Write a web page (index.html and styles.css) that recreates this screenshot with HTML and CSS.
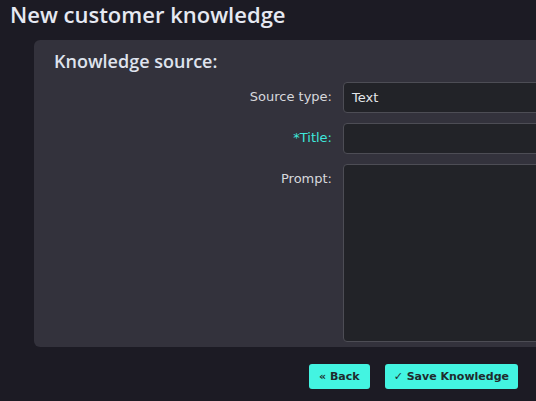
FILE: index.html
```html
<!DOCTYPE html>
<html lang="en">
<head>
<meta charset="utf-8">
<title>New customer knowledge</title>
<link rel="stylesheet" href="styles.css">
</head>
<body>
<main class="page">
  <h1 class="page-title">New customer knowledge</h1>
  <section class="panel">
    <h2 class="panel-title">Knowledge source:</h2>
    <div class="form-grid">
      <label class="field-label" for="src-type">Source type:</label>
      <div class="field-input select-box" id="src-type">Text</div>

      <label class="field-label required" for="title">*Title:</label>
      <input class="field-input" id="title" type="text">

      <label class="field-label" for="prompt">Prompt:</label>
      <textarea class="field-input field-area" id="prompt"></textarea>
    </div>
  </section>
  <div class="actions">
    <button class="btn btn-back" type="button">« Back</button>
    <button class="btn" type="button">✓ Save Knowledge</button>
  </div>
</main>
</body>
</html>
```

FILE: styles.css
```css
html, body {
  margin: 0;
  padding: 0;
  background: #1c1b24;
  overflow: hidden;
}

.page {
  width: 536px;
  height: 401px;
  overflow: hidden;
  font-family: "DejaVu Sans", Verdana, sans-serif;
}

.page-title {
  margin: 0;
  padding: 0 0 0 10px;
  height: 40px;
  line-height: 29px;
  font-family: "Open Sans", "Noto Sans", sans-serif;
  font-weight: 600;
  font-size: 22px;
  color: #e6e9f2;
}

.panel {
  margin-left: 34px;
  width: 700px;
  height: 307px;
  box-sizing: border-box;
  background: #33323c;
  border-radius: 6px;
  padding: 10px 0 0 20px;
}

.panel-title {
  margin: 0 0 9px 0;
  font-family: "Open Sans", "Noto Sans", sans-serif;
  font-weight: 600;
  font-size: 18px;
  line-height: 23px;
  color: #dfe3ee;
}

.form-grid {
  display: grid;
  grid-template-columns: 278px 1fr;
  column-gap: 11px;
  row-gap: 10px;
}

.field-label {
  text-align: right;
  font-size: 13px;
  line-height: 16px;
  padding-top: 7px;
  color: #d7d8dc;
}

.field-label.required {
  color: #3ee6db;
}

.field-input {
  box-sizing: border-box;
  height: 31px;
  margin: 0;
  background: #222328;
  border: 1px solid #4d4d55;
  border-radius: 4px;
  padding: 0 8px;
  font-family: "DejaVu Sans", Verdana, sans-serif;
  font-size: 13px;
  line-height: 29px;
  color: #e4e6ea;
  outline: none;
}

.field-area {
  height: 178px;
  resize: none;
}

.actions {
  display: flex;
  justify-content: flex-end;
  gap: 15px;
  padding: 17px 18px 0 0;
}

.btn {
  height: 25px;
  padding: 0 9px;
  border: none;
  border-radius: 3px;
  background: #43f4e1;
  color: #1f2b2e;
  font-family: "DejaVu Sans", Verdana, sans-serif;
  font-weight: bold;
  font-size: 11px;
  cursor: pointer;
}

.btn-back {
  padding: 0 10px;
}
```
